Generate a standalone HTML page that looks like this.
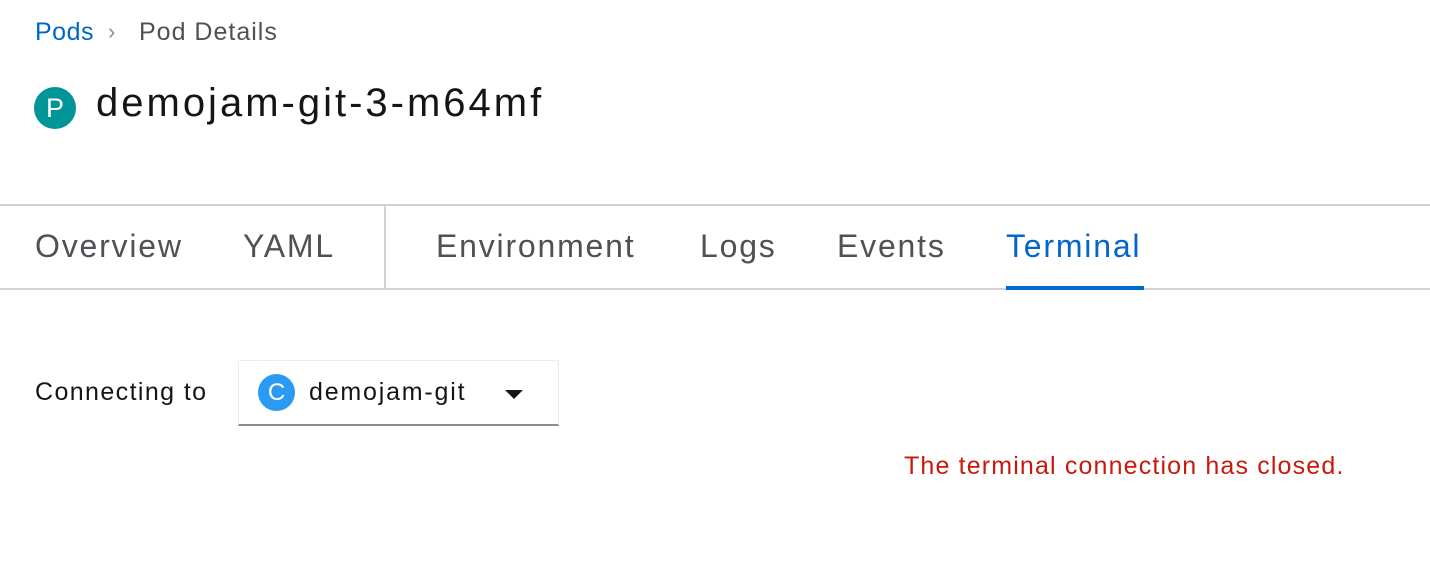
<!DOCTYPE html>
<html><head><style>
body{margin:0;width:1430px;height:564px;background:#fff;font-family:"Liberation Sans",sans-serif;position:relative;overflow:hidden;color:#151515}
.a{position:absolute;white-space:nowrap}
.t{font-size:32px;color:#4f5255;letter-spacing:1.8px;top:228px}
</style></head><body>
<div class="a" style="left:35px;top:18px;font-size:25px;color:#06c;letter-spacing:0.5px">Pods</div>
<div class="a" style="left:108px;top:19px;font-size:22px;color:#8a8d90">›</div>
<div class="a" style="left:139px;top:18px;font-size:25px;color:#4f5255;letter-spacing:1px">Pod Details</div>
<div class="a" style="left:34px;top:87px;width:42px;height:42px;border-radius:50%;background:#009596;color:#fff;font-size:27px;text-align:center;line-height:42px">P</div>
<div class="a" style="left:96px;top:81px;font-size:40px;color:#151515;letter-spacing:3px">demojam-git-3-m64mf</div>
<div class="a" style="left:0;top:204px;width:1430px;height:2px;background:#d2d2d2"></div>
<div class="a" style="left:0;top:288px;width:1430px;height:2px;background:#d2d2d2"></div>
<div class="a" style="left:384px;top:206px;width:2px;height:82px;background:#d2d2d2"></div>
<div class="a t" style="left:35px">Overview</div>
<div class="a t" style="left:243px">YAML</div>
<div class="a t" style="left:436px">Environment</div>
<div class="a t" style="left:700px">Logs</div>
<div class="a t" style="left:837px">Events</div>
<div class="a t" style="left:1006px;color:#06c">Terminal</div>
<div class="a" style="left:1006px;top:286px;width:138px;height:4px;background:#06c"></div>
<div class="a" style="left:35px;top:378px;font-size:25px;letter-spacing:1.4px">Connecting to</div>
<div class="a" style="left:238px;top:360px;width:319px;height:63px;border:1px solid #ededed;border-bottom:2px solid #8a8d90"></div>
<div class="a" style="left:258px;top:374px;width:37px;height:37px;border-radius:50%;background:#2b9af3;color:#fff;font-size:24px;text-align:center;line-height:37px">C</div>
<div class="a" style="left:309px;top:378px;font-size:25px;letter-spacing:1.8px">demojam-git</div>
<div class="a" style="left:505px;top:390px;width:0;height:0;border-left:9px solid transparent;border-right:9px solid transparent;border-top:9px solid #151515"></div>
<div class="a" style="left:904px;top:452px;font-size:25px;color:#c9190b;letter-spacing:1.15px">The terminal connection has closed.</div>
</body></html>
